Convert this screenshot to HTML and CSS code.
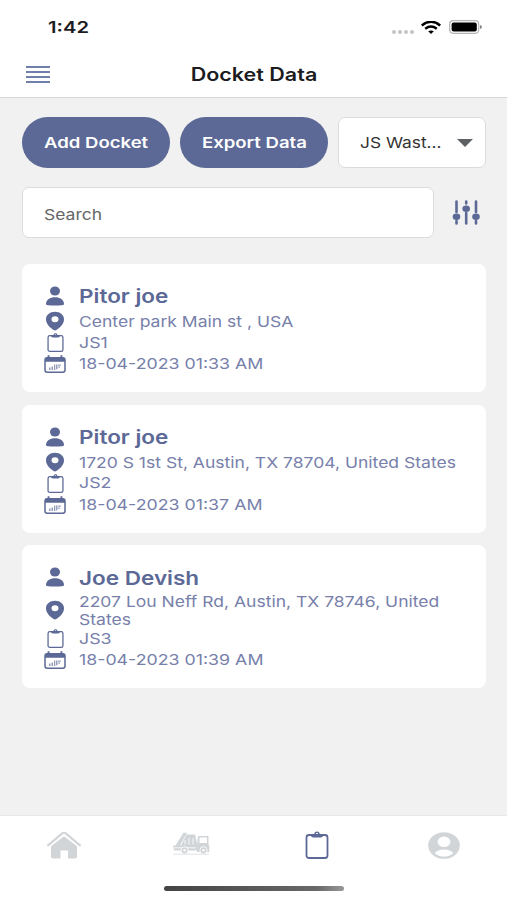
FILE: index.html
```
<!DOCTYPE html>
<html lang="en">
<head>
<meta charset="utf-8">
<title>Docket Data</title>
<link rel="stylesheet" href="styles.css">
</head>
<body>
<svg class="defs" width="0" height="0" aria-hidden="true">
  <symbol id="user" viewBox="0 0 20 20" preserveAspectRatio="none"><ellipse cx="10" cy="5" rx="5" ry="4.6"/><path d="M1 18.2C1 13.5 5 11.2 10 11.2s9 2.300 9 7c0 .7-2 1.300-9 1.300s-9-.6-9-1.300z"/></symbol>
  <symbol id="pin" viewBox="0 0 20 20" preserveAspectRatio="none"><path fill-rule="evenodd" d="M10 .8C4.800.8 1 4 1 8.500c0 4.700 4.500 8.300 7.300 10.300q1.700 1.200 3.400 0C14.500 16.800 19 13.200 19 8.500 19 4 15.200.8 10 .8zM10 5.300a3.500 3 0 1 1 0 6 3.500 3 0 0 1 0-6z"/></symbol>
  <symbol id="clip" viewBox="0 0 24 28" preserveAspectRatio="none"><rect class="outline" x="1.500" y="4" width="21" height="23" rx="2.500"/><path fill-rule="evenodd" d="M5.500 3h3.700C9.500 1.300 10.500.5 12 .5s2.500.8 2.800 2.500h3.700c0 2-1 3.500-2.900 3.500H8.400C6.500 6.500 5.500 5 5.500 3zM12 1.700a1 .9 0 1 0 0 1.800 1 .9 0 0 0 0-1.800z"/></symbol>
  <symbol id="cal" viewBox="0 0 22 18" preserveAspectRatio="none"><rect x="1" y="2.700" width="20" height="14.500" rx="2.200" fill="none" stroke="currentColor" stroke-width="1.500"/><path d="M1 6.800V4.500q0-2 2-2h16q2 0 2 2v2.300zM3.600.3h1.900V3H3.600zM16.500.3h1.900V3h-1.900z"/><path d="M5 12.500h1.500V15H5zM7.500 11.500H9V15H7.500zM10 9.500h1.300V15H10zM12 9.500h1.500v4.800H12zM14.200 9.500h2.600v1.200h-2.600zM14.200 11.500h1.800v1.300h-1.800z" opacity=".65"/></symbol>
</svg>

<header class="top">
  <div class="status">
    <span class="time"><b class="wide">1:42</b></span>
    <div class="signals">
      <span class="dots"><i></i><i></i><i></i><i></i></span>
      <svg class="wifi" viewBox="0 0 20 13" preserveAspectRatio="none"><path d="M.8 4.400Q10-2.900 19.200 4.400M4.200 7.700q5.800-4.300 11.600 0" fill="none" stroke="#000" stroke-width="2.500"/><path d="M7.200 10.300q2.800-1.700 5.600 0L10 12.900z"/></svg>
      <svg class="battery" viewBox="0 0 34 14"><rect x=".7" y=".7" width="29" height="12.600" rx="3.500" fill="#fff" stroke="#b5b5b5" stroke-width="1.200"/><rect x="2.600" y="2.500" width="25.200" height="9" rx="2"/><path d="M31 5q2 .5 2 2t-2 2z" fill="#888"/></svg>
    </div>
  </div>
  <div class="titlebar">
    <div class="menu"><i></i><i></i><i></i><i></i></div>
    <h1><span class="wide">Docket Data</span></h1>
  </div>
</header>

<main>
  <div class="actions">
    <button class="pill"><span class="wide">Add Docket</span></button>
    <button class="pill"><span class="wide">Export Data</span></button>
    <div class="select"><span class="wide">JS Wast...</span><i class="caret"></i></div>
  </div>
  <div class="searchrow">
    <div class="search"><span class="wide">Search</span></div>
    <svg class="filter" viewBox="0 0 28 25"><path d="M4.500 1.500v10.500M4.500 21v2.500M14.200 1.500v2M14.200 13v10.500M24 1.500v10.500M24 21v2.500" stroke="currentColor" stroke-width="2.600" stroke-linecap="round"/><ellipse cx="4.500" cy="16.800" rx="3.800" ry="3.200"/><ellipse cx="14.200" cy="8.800" rx="3.800" ry="3.200"/><ellipse cx="24" cy="16.800" rx="3.800" ry="3.200"/></svg>
  </div>

  <section class="cards">
    <article class="card">
      <div class="row name"><svg class="ic"><use href="#user"/></svg><span class="wide">Pitor joe</span></div>
      <div class="row address"><svg class="ic"><use href="#pin"/></svg><span class="wide">Center park Main st , USA</span></div>
      <div class="row"><svg class="ic clip"><use href="#clip"/></svg><span class="wide">JS1</span></div>
      <div class="row"><svg class="ic cal"><use href="#cal"/></svg><span class="wide">18-04-2023 01:33 AM</span></div>
    </article>
    <article class="card">
      <div class="row name"><svg class="ic"><use href="#user"/></svg><span class="wide">Pitor joe</span></div>
      <div class="row address"><svg class="ic"><use href="#pin"/></svg><span class="wide">1720 S 1st St, Austin, TX 78704, United States</span></div>
      <div class="row"><svg class="ic clip"><use href="#clip"/></svg><span class="wide">JS2</span></div>
      <div class="row"><svg class="ic cal"><use href="#cal"/></svg><span class="wide">18-04-2023 01:37 AM</span></div>
    </article>
    <article class="card">
      <div class="row name"><svg class="ic"><use href="#user"/></svg><span class="wide">Joe Devish</span></div>
      <div class="row address"><svg class="ic"><use href="#pin"/></svg><span class="wide">2207 Lou Neff Rd, Austin, TX 78746, United<br>States</span></div>
      <div class="row"><svg class="ic clip"><use href="#clip"/></svg><span class="wide">JS3</span></div>
      <div class="row"><svg class="ic cal"><use href="#cal"/></svg><span class="wide">18-04-2023 01:39 AM</span></div>
    </article>
  </section>
</main>

<footer>
  <nav>
    <a><svg width="34" height="27" viewBox="0 0 34 27"><path d="M1 13.300 15.500 1.200q1.500-1 3 0L33 13.300" fill="none" stroke="currentColor" stroke-width="2.200" stroke-linecap="round"/><path d="M4 14.300 17 4.300l13 10v10.200q0 2-2 2h-7v-8h-7.500v8H6q-2 0-2-2z"/></svg></a>
    <a><svg class="truck" width="38" height="23" viewBox="0 0 38 23"><path d="M1 13.500h25v5H2zM3.500 13.500 11.500.8h3.500L8 13.500zM14.500 2.500h8.500L25.500 13.500H9z"/><path d="M26 4h10.500v8.500l.8 1V20H25v-6z"/><path d="M27.500 5.500h7.500V11h-7.500z" fill="#fff"/><path d="M13 8v4.500M17 6v6.500M21 6v6.500M2 15.800h22M33 5v6" fill="none" stroke="#fff" stroke-width=".8"/><g stroke="#fff" stroke-width=".8"><circle cx="12.500" cy="18.300" r="3.600"/><circle cx="31.500" cy="18.300" r="3.600"/></g><g fill="#fff"><circle cx="12.500" cy="18.300" r="1.200"/><circle cx="31.500" cy="18.300" r="1.200"/></g><path d="M1 22.200h36" stroke="currentColor" stroke-width=".7"/></svg></a>
    <a class="active"><svg width="24" height="28"><use href="#clip"/></svg></a>
    <a><svg width="32" height="27" viewBox="0 0 32 27"><ellipse cx="16" cy="13.500" rx="15.800" ry="13.300"/><ellipse cx="16" cy="9.800" rx="6.400" ry="5.300" fill="#fff"/><path d="M6.800 21.200q2.700-3.700 9.200-3.700t9.200 3.700Q21.500 24.600 16 24.600t-9.200-3.400z" fill="#fff"/></svg></a>
  </nav>
  <div class="homebar"></div>
</footer>
</body>
</html>
```

FILE: styles.css
```
* { box-sizing: border-box; }
body {
  margin: 0;
  width: 507px;
  height: 900px;
  display: flex;
  flex-direction: column;
  overflow: hidden;
  background: #f1f1f1;
  font-family: Inter, "Liberation Sans", sans-serif;
  color: #1c1c1e;
}
.defs { position: absolute; }
svg { display: block; flex: none; fill: currentColor; }
.wide {
  display: inline-block;
  white-space: nowrap;
  transform: scaleX(var(--stretch, 1.185));
  transform-origin: var(--origin, left) center;
}
.top { height: 98px; background: #fff; border-bottom: 1.500px solid #d6d6d6; }
.status {
  height: 54px;
  padding: 0 24px 0 48px;
  display: flex;
  align-items: center;
  justify-content: space-between;
}
.time { --stretch: 1.26; font-size: 16px; }
.time b { font-weight: 600; }
.signals { display: flex; align-items: center; color: #000; }
.dots { display: flex; gap: 2px; padding-top: 9px; margin-right: 7px; }
.dots i { width: 4px; height: 4px; border-radius: 50%; background: #c4c4c4; }
.wifi { width: 20px; height: 13px; margin-right: 8px; }
.battery { width: 34px; height: 14px; }
.titlebar {
  height: 42px;
  padding: 0 26px;
  display: grid;
  grid-template-columns: 24px 1fr 24px;
  align-items: center;
}
.menu { display: grid; gap: 3px; padding-bottom: 1px; }
.menu i { height: 2px; background: #7180ab; }
h1 {
  --origin: center;
  --stretch: 1.195;
  margin: 0;
  text-align: center;
  font-size: 18px;
  line-height: 22px;
  font-weight: 600;
}
main { flex: 1; padding: 19px 21px 0 22px; }
.actions { display: grid; grid-template-columns: repeat(3, 148px); gap: 10px; }
.pill {
  --origin: center;
  --stretch: 1.235;
  height: 51px;
  padding: 0;
  border: 0;
  border-radius: 26px;
  background: #5c6996;
  color: #fff;
  font: 600 15px Inter, sans-serif;
}
.select, .search {
  height: 51px;
  border: 1.500px solid #d9dcde;
  border-radius: 7px;
  background: #fff;
  display: flex;
  align-items: center;
}
.select { --stretch: 1.155; padding: 0 12px 0 21px; justify-content: space-between; color: #333; font-size: 15px; }
.caret { border: 8.500px solid transparent; border-top: 8.500px solid #5d6164; border-bottom: 0; }
.searchrow { display: flex; align-items: center; gap: 18px; margin-top: 19.400px; }
.search { --stretch: 1.165; width: 412px; padding: 3px 0 0 21px; color: #666; font-size: 15px; }
.filter { width: 28px; height: 25px; color: #5c6996; }
.cards { display: grid; gap: 12.750px; margin-top: 25.600px; }
.card {
  padding: 19px 20px 17px 22px;
  border-radius: 8px;
  background: #fff;
  color: #7780aa;
}
.row {
  min-height: 21.500px;
  display: grid;
  grid-template-columns: 22px 1fr;
  gap: 13px;
  align-items: center;
  justify-items: start;
  font-size: 15px;
  line-height: 18px;
}
.address { --stretch: 1.168; }
.address .wide { padding-top: 2px; margin: -1px 0; }
.name { height: 26px; margin-bottom: 1.500px; font-size: 19px; font-weight: 600; color: #5c6996; }
.name .wide { padding-top: 2px; margin-bottom: -1px; }
.ic { width: 20px; height: 20px; justify-self: center; color: #5c6996; }
.ic.clip { width: 17px; height: 19px; }
.ic.cal { width: 22px; height: 18px; }
.outline { fill: none; stroke: currentColor; stroke-width: 1.800; }
footer { height: 85px; background: #fff; border-top: 1px solid #e8e8e8; }
nav { height: 59px; padding-left: 1px; display: grid; grid-template-columns: repeat(4, 1fr); place-items: center; color: #d2d5d8; }
nav .active { color: #5c6996; padding-bottom: 2px; }
.truck { margin-bottom: 4px; }
.homebar {
  width: 180px;
  height: 5px;
  margin: 11px 0 0 164px;
  border-radius: 3px;
  background: linear-gradient(90deg, #444, #686868 85%, #999);
}
```
